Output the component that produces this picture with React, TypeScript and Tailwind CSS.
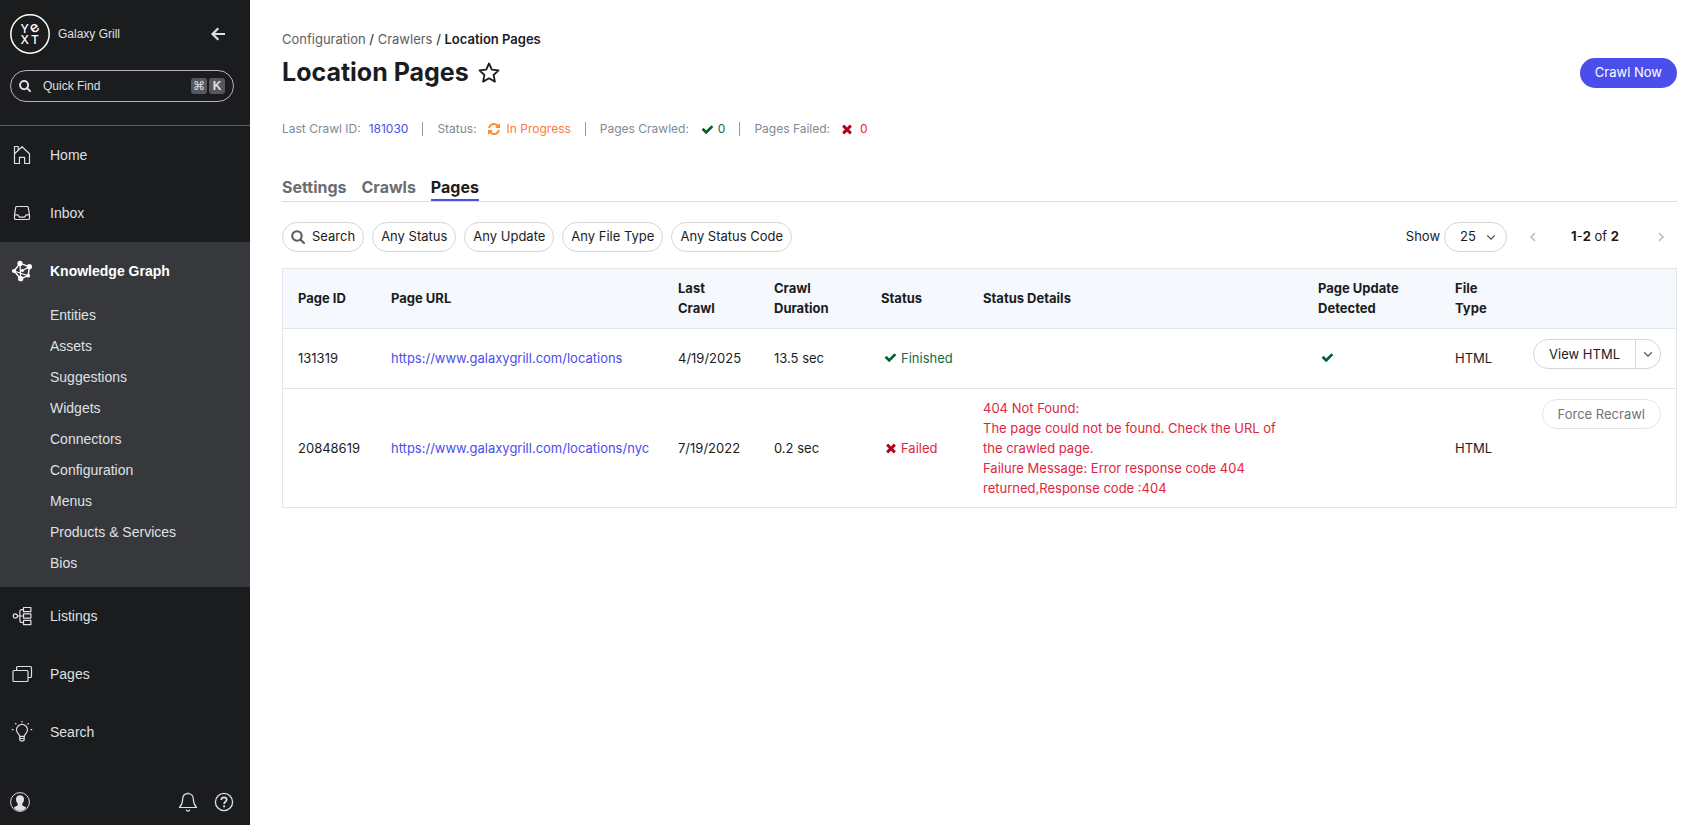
import React, { useState } from 'react';

const CheckIcon = () => (
  <svg viewBox="0 0 1792 1792" className="w-[13px] h-[13px] shrink-0 fill-[#00602b]" aria-hidden="true">
    <path d="M1671 566q0 40-28 68l-724 724-136 136q-28 28-68 28t-68-28l-136-136-362-362q-28-28-28-68t28-68l136-136q28-28 68-28t68 28l294 295 656-657q28-28 68-28t68 28l136 136q28 28 28 68z" />
  </svg>
);

const TimesIcon = () => (
  <svg viewBox="0 0 1792 1792" className="w-3.5 h-3.5 shrink-0 fill-[#b5001f]" aria-hidden="true">
    <path d="M1490 1322q0 40-28 68l-136 136q-28 28-68 28t-68-28l-294-294-294 294q-28 28-68 28t-68-28l-136-136q-28-28-28-68t28-68l294-294-294-294q-28-28-28-68t28-68l136-136q28-28 68-28t68 28l294 294 294-294q28-28 68-28t68 28l136 136q28 28 28 68t-28 68l-294 294 294 294q28 28 28 68z" />
  </svg>
);

const RefreshIcon = () => (
  <svg viewBox="0 0 1792 1792" className="w-3.5 h-3.5 shrink-0 fill-[#ff8a2b]" aria-hidden="true">
    <path d="M1639 1056q0 5-1 7-64 268-268 434.5t-478 166.5q-146 0-282.5-55t-243.5-157l-129 129q-19 19-45 19t-45-19-19-45v-448q0-26 19-45t45-19h448q26 0 45 19t19 45-19 45l-137 137q71 66 161 102t187 36q134 0 250-65t186-179q11-17 53-117 8-23 30-23h192q13 0 22.5 9.5t9.5 22.5zm25-800v448q0 26-19 45t-45 19h-448q-26 0-45-19t-19-45 19-45l138-138q-148-137-349-137-134 0-250 65t-186 179q-11 17-53 117-8 23-30 23h-199q-13 0-22.5-9.5t-9.5-22.5v-7q65-268 270-434.5t480-166.5q146 0 284 55.5t245 156.5l130-129q19-19 45-19t45 19 19 45z" />
  </svg>
);

const SearchIcon = ({ className }: { className: string }) => (
  <svg viewBox="0 0 16 16" className={className} fill="none" stroke="currentColor" aria-hidden="true">
    <circle cx="6.8" cy="6.8" r="5.4" />
    <path d="M10.8 10.8l4 4" strokeLinecap="round" />
  </svg>
);

const Chevron = ({ d, className }: { d: string; className: string }) => (
  <svg viewBox="0 0 12 12" className={className} fill="none" stroke="currentColor" strokeWidth="1.5" aria-hidden="true">
    <path d={d} />
  </svg>
);

const NavIcon = ({ children }: { children: React.ReactNode }) => (
  <svg viewBox="0 0 24 24" className="w-6 h-6 shrink-0" fill="none" stroke="currentColor" strokeWidth="1.2" strokeLinejoin="round" aria-hidden="true">
    {children}
  </svg>
);

const HomeIcon = () => (
  <NavIcon>
    <path d="M4.5 20.5V10.7L12 3.7l7.5 7v9.8h-4.9v-6.2H9.4v6.2z" />
    <path d="M4.5 10.5v-7h3.7v3.4" />
  </NavIcon>
);

const InboxIcon = () => (
  <NavIcon>
    <path d="M6.9 5.5h10.2q1 0 1.2 1l1.2 7.3v3.4q0 1.3-1.3 1.3H5.8q-1.3 0-1.3-1.3v-3.4l1.2-7.3q.2-1 1.2-1z" />
    <path d="M4.5 13.9h3.3l1.6 2.3h5.2l1.6-2.3h3.3" />
  </NavIcon>
);

const GraphIcon = () => (
  <NavIcon>
    <path d="M10 4.4l9.4 3.2-1.2 9.1-7.5 3L4 12z" strokeWidth="1.4" />
    <path d="M10 4.4l.7 15.3M12.7 11.5l6.7-3.9M4 12l14.2 4.7" strokeWidth="1.2" />
    <g fill="currentColor" stroke="none">
      <circle cx="10" cy="4.4" r="2.6" />
      <circle cx="19.4" cy="7.7" r="2.6" />
      <circle cx="4" cy="12" r="2.1" />
      <circle cx="18.2" cy="16.7" r="1.9" />
      <circle cx="10.7" cy="19.7" r="2.6" />
      <circle cx="12.4" cy="11.6" r="1.5" />
    </g>
  </NavIcon>
);

const ListingsIcon = () => (
  <NavIcon>
    <circle cx="5.3" cy="12" r="2.1" />
    <rect x="13.5" y="3.5" width="7.4" height="4.2" />
    <rect x="13.5" y="9.9" width="7.4" height="4.2" />
    <rect x="13.5" y="16.4" width="7.4" height="4.2" />
    <path d="M7.4 12h6.1M13.5 5.6h-1.6q-2 0-2 2v8.9q0 2 2 2h1.6" />
  </NavIcon>
);

const PagesIcon = () => (
  <NavIcon>
    <rect x="3" y="8.5" width="15" height="11" rx="1" />
    <path d="M6.6 8.3V5.5q0-1 1-1h12.9q1 0 1 1v9q0 1-1 1H18" />
  </NavIcon>
);

const BulbIcon = () => (
  <NavIcon>
    <path d="M9.7 16.4c0-2-3.2-3.3-3.2-6.5a5.5 5.5 0 0 1 11 0c0 3.2-3.2 4.5-3.2 6.5z" />
    <path d="M9.8 16.4v3q0 1.4 1.2 1.4h2q1.2 0 1.2-1.4v-3M9.8 18.5h4.4" />
    <path d="M12 .9v1.5M5.2 3.2l1.2 1.2M18.8 3.2l-1.2 1.2M1.800 9.600h1.600M20.600 9.600h1.600" />
  </NavIcon>
);

const subItems = ['Entities', 'Assets', 'Suggestions', 'Widgets', 'Connectors', 'Configuration', 'Menus', 'Products & Services', 'Bios'];

const NavItem = ({ label, icon, active }: { label: string; icon: React.ReactNode; active?: boolean }) => (
  <a
    href="#"
    className={`flex items-center gap-4 h-[58px] px-2.5 text-sm ${active ? 'text-white font-bold' : 'text-[#dfe0e4]'}`}
  >
    {icon}
    {label}
  </a>
);

const Sidebar = () => (
  <aside className="w-[250px] shrink-0 flex flex-col bg-[#1b1c1e] text-[#dfe0e4] font-['Liberation_Sans',Arial,sans-serif]">
    <div className="border-b border-[#5c5d60] px-2.5 pt-3.5 pb-[23px]">
      <div className="flex items-center">
        <svg viewBox="0 0 40 40" className="w-10 h-10 shrink-0" role="img" aria-label="Yext">
          <circle cx="20" cy="20" r="19.2" fill="none" stroke="#fff" strokeWidth="1.5" />
          <g fill="#fff" fontFamily="Inter, sans-serif" fontSize="12" fontWeight="500" textAnchor="middle">
            <text x="14.8" y="18.6">Y</text>
            <text x="24.8" y="18.2" fontSize="15" transform="rotate(-35 24.8 14.4)">e</text>
            <text x="14.8" y="30">X</text>
            <text x="25" y="30">T</text>
          </g>
        </svg>
        <span className="ml-2 text-xs">Galaxy Grill</span>
        <button className="ml-auto mr-3.5" aria-label="Collapse menu">
          <svg viewBox="0 0 16 16" className="w-4 h-4" fill="none" stroke="currentColor" strokeWidth="2.2">
            <path d="M8.3 2.2L2.5 8l5.8 5.8M2.5 8H15" />
          </svg>
        </button>
      </div>
      <button className="mt-4 w-[224px] h-8 flex items-center rounded-full border border-[#b5b5b8] px-2 text-xs">
        <SearchIcon className="w-3 h-3 stroke-[2.6]" />
        <span className="ml-3">Quick Find</span>
        <kbd className="ml-auto w-4 h-4 rounded-[3px] bg-[#55575a] flex items-center justify-center text-xs leading-4 font-['DejaVu_Sans',sans-serif]">⌘</kbd>
        <kbd className="ml-0.5 w-4 h-4 rounded-[3px] bg-[#55575a] flex items-center justify-center text-xs leading-4 font-bold font-['Liberation_Sans',Arial,sans-serif]">K</kbd>
      </button>
    </div>
    <nav>
      <NavItem label="Home" icon={<HomeIcon />} />
      <NavItem label="Inbox" icon={<InboxIcon />} />
      <div className="bg-[#37383c] pb-2">
        <NavItem label="Knowledge Graph" icon={<GraphIcon />} active />
        <ul>
          {subItems.map((item) => (
            <li key={item}>
              <a href="#" className="block pl-[50px] text-sm leading-[31px]">{item}</a>
            </li>
          ))}
        </ul>
      </div>
      <NavItem label="Listings" icon={<ListingsIcon />} />
      <NavItem label="Pages" icon={<PagesIcon />} />
      <NavItem label="Search" icon={<BulbIcon />} />
    </nav>
    <div className="mt-auto flex items-center pl-2.5 pr-4 pb-[13px]">
      <button aria-label="Account">
        <svg viewBox="0 0 20 20" className="w-5 h-5">
          <circle cx="10" cy="10" r="9.4" fill="none" stroke="currentColor" strokeWidth="1" />
          <path d="M10 3.2c2.5 0 4 1.6 4 4 0 1.8-.7 3.3-1.7 4.2v1.9c.5.9 3 1.2 4 2.4A9 9 0 0 1 10 19a9 9 0 0 1-6.3-3.3c1-1.2 3.5-1.5 4-2.4v-1.9C6.7 10.5 6 9 6 7.2c0-2.4 1.5-4 4-4z" fill="currentColor" />
        </svg>
      </button>
      <button className="ml-auto" aria-label="Notifications">
        <svg viewBox="0 0 20 20" className="w-5 h-5" fill="none" stroke="currentColor" strokeWidth="1.2" strokeLinejoin="round">
          <path d="M10 1.7c-3.4 0-5.3 2.3-5.3 5.3 0 4.5-1 6-3.2 8.5h17c-2.2-2.5-3.2-4-3.2-8.5 0-3-1.9-5.3-5.3-5.3zM10 .4v1.3M8.2 17.7c.2 1 .9 1.5 1.8 1.5s1.6-.5 1.8-1.5" />
        </svg>
      </button>
      <button className="ml-4" aria-label="Help">
        <svg viewBox="0 0 20 20" className="w-5 h-5" fill="none" stroke="currentColor" strokeWidth="1.3">
          <circle cx="10" cy="10" r="8.6" />
          <path d="M7.3 8c0-1.7 1.1-2.6 2.7-2.6s2.7.9 2.7 2.4c0 2-2.6 1.9-2.6 4.1" strokeWidth="1.7" />
          <circle cx="10.1" cy="14.3" r="1.1" fill="currentColor" stroke="none" />
        </svg>
      </button>
    </div>
  </aside>
);

const Divider = () => <span className="w-px h-3.5 mx-3.5 bg-[#8d99a3]" />;

const CrawlStatus = () => (
  <div className="mt-[31px] flex items-center text-xs leading-5 text-[#7e8b95]">
    <span>Last Crawl ID:</span>
    <a href="#" className="ml-2 text-[#4b4eea]">181030</a>
    <Divider />
    <span>Status:</span>
    <span className="ml-2.5 flex items-center gap-1.5 text-[#fb7a3c]"><RefreshIcon />In Progress</span>
    <Divider />
    <span>Pages Crawled:</span>
    <span className="ml-3 flex items-center gap-1 text-[#0f6c45]"><CheckIcon />0</span>
    <Divider />
    <span>Pages Failed:</span>
    <span className="ml-2.5 flex items-center gap-1.5 text-[#e0263f]"><TimesIcon />0</span>
  </div>
);

const tabs = ['Settings', 'Crawls', 'Pages'];

const Tabs = () => (
  <div className="mt-9 flex gap-[15px] border-b border-[#dcdddf]">
    {tabs.map((tab) => (
      <a
        key={tab}
        href="#"
        className={`text-base leading-6 font-bold border-b-2 ${tab === 'Pages' ? 'text-[#1b1c1e] border-[#4b4eea]' : 'text-[#6b6d70] border-transparent'}`}
      >
        {tab}
      </a>
    ))}
  </div>
);

const filters = ['Any Status', 'Any Update', 'Any File Type', 'Any Status Code'];

const Toolbar = () => {
  const [pageSize, setPageSize] = useState('25');

  return (
    <div className="mt-5 flex items-center">
      <div className="flex gap-2">
        <button className="h-[30px] px-2 flex items-center gap-[7px] rounded-full border border-[#d4d5d8]">
          <SearchIcon className="w-3.5 h-3.5 stroke-[2.4] text-[#5c5e61]" />
          Search
        </button>
        {filters.map((filter) => (
          <button key={filter} className="h-[30px] px-2 rounded-full border border-[#d4d5d8]">{filter}</button>
        ))}
      </div>
      <div className="ml-auto flex items-center">
        <label htmlFor="page-size">Show</label>
        <div className="relative ml-1">
          <select
            id="page-size"
            value={pageSize}
            onChange={(e) => setPageSize(e.target.value)}
            className="block w-[63px] h-[30px] pl-[15px] rounded-full border border-[#d4d5d8] bg-white appearance-none"
          >
            <option>25</option>
            <option>50</option>
            <option>100</option>
          </select>
          <Chevron d="M1.5 4L6 8.5 10.5 4" className="w-2.5 h-2.5 absolute right-[11px] top-2.5 text-[#3f4b57] pointer-events-none" />
        </div>
        <button className="ml-5 text-[#b6bbc0]" aria-label="Previous page" disabled>
          <Chevron d="M8 2L4 6l4 4" className="w-3 h-3" />
        </button>
        <span className="ml-8"><b className="font-bold">1</b>-<b className="font-bold">2</b> of <b className="font-bold">2</b></span>
        <button className="ml-9 mr-2.5 text-[#b6bbc0]" aria-label="Next page" disabled>
          <Chevron d="M4 2l4 4-4 4" className="w-3 h-3" />
        </button>
      </div>
    </div>
  );
};

const cell = 'h-[60px] border-b border-[#e2e5ea] pl-[15px] pb-0.5 text-left';
const lastCell = 'py-[9px] pl-[15px] text-left';

const PagesTable = () => (
  <div className="mt-4 border border-[#e2e5ea]">
    <table className="w-full table-fixed border-separate border-spacing-0 leading-5">
      <colgroup>
        <col className="w-[93px]" />
        <col className="w-[287px]" />
        <col className="w-24" />
        <col className="w-[107px]" />
        <col className="w-[102px]" />
        <col />
        <col className="w-[137px]" />
        <col className="w-[78px]" />
        <col className="w-[158px]" />
      </colgroup>
      <thead className="bg-[#f5f8fd]">
        <tr>
          <th className={`${cell} font-bold`}>Page ID</th>
          <th className={`${cell} font-bold`}>Page URL</th>
          <th className={`${cell} font-bold`}>Last<br />Crawl</th>
          <th className={`${cell} font-bold`}>Crawl<br />Duration</th>
          <th className={`${cell} font-bold`}>Status</th>
          <th className={`${cell} font-bold`}>Status Details</th>
          <th className={`${cell} font-bold`}>Page Update<br />Detected</th>
          <th className={`${cell} font-bold`}>File<br />Type</th>
          <td className={cell}></td>
        </tr>
      </thead>
      <tbody>
        <tr>
          <td className={cell}>131319</td>
          <td className={cell}><a href="#" className="text-[#4b4eea]">https://www.galaxygrill.com/locations</a></td>
          <td className={cell}>4/19/2025</td>
          <td className={cell}>13.5 sec</td>
          <td className={cell}>
            <span className="ml-[3px] flex items-center gap-1 text-[#0f6c45]"><CheckIcon />Finished</span>
          </td>
          <td className={cell}></td>
          <td className={cell}><span className="ml-[3px] flex"><CheckIcon /></span></td>
          <td className={cell}>HTML</td>
          <td className={`${cell} align-top pt-2.5 pr-[15px]`}>
            <div className="flex justify-end">
              <button className="h-[30px] px-[15px] rounded-l-full border border-[#d4d5d8] whitespace-nowrap">View HTML</button>
              <button className="h-[30px] w-[25px] shrink-0 flex items-center justify-center rounded-r-full border border-l-0 border-[#d4d5d8]" aria-label="More actions">
                <Chevron d="M1.5 4L6 8.5 10.5 4" className="w-2.5 h-2.5 text-[#3f4b57]" />
              </button>
            </div>
          </td>
        </tr>
        <tr>
          <td className={lastCell}>20848619</td>
          <td className={lastCell}><a href="#" className="text-[#4b4eea]">https://www.galaxygrill.com/locations/nyc</a></td>
          <td className={lastCell}>7/19/2022</td>
          <td className={lastCell}>0.2 sec</td>
          <td className={lastCell}>
            <span className="ml-[3px] flex items-center gap-[3px] text-[#e0263f]"><TimesIcon />Failed</span>
          </td>
          <td className={`${lastCell} pr-4 text-[#e0263f]`}>
            <p>404 Not Found:</p>
            <p>The page could not be found. Check the URL of the crawled page.</p>
            <p>Failure Message: Error response code 404 returned,Response code :404</p>
          </td>
          <td className={lastCell}></td>
          <td className={lastCell}>HTML</td>
          <td className="align-top pt-2.5 pr-[15px] text-right">
            <button className="h-[30px] px-[15px] rounded-full border border-[#e4e5e7] text-[#717375]" disabled>Force Recrawl</button>
          </td>
        </tr>
      </tbody>
    </table>
  </div>
);

const App = () => {
  return (
    <div className="flex min-h-screen bg-white text-[#1b1c1e]">
      <Sidebar />
      <main className="grow min-w-0 pl-8 pr-[18px] pt-[29px] text-[13px] font-['Inter',sans-serif]">
        <nav className="leading-5" aria-label="Breadcrumb">
          <a href="#" className="text-[#5c5e61]">Configuration</a>
          {' / '}
          <a href="#" className="text-[#5c5e61]">Crawlers</a>
          {' / '}
          <span className="font-semibold">Location Pages</span>
        </nav>
        <div className="mt-[9px] h-[30px] flex items-center">
          <h1 className="text-[25px] font-bold">Location Pages</h1>
          <button className="ml-2" aria-label="Add to favorites">
            <svg viewBox="0 0 24 24" className="w-6 h-6" fill="none" stroke="currentColor" strokeWidth="1.8" strokeLinejoin="round">
              <path d="M12 2.5l2.8 6.1 6.7.8-4.9 4.6 1.3 6.6L12 17.3l-5.9 3.3 1.3-6.6-4.9-4.6 6.7-.8z" />
            </svg>
          </button>
          <button className="ml-auto h-[30px] px-[15px] rounded-full bg-[#4b4eea] text-white">Crawl Now</button>
        </div>
        <CrawlStatus />
        <Tabs />
        <Toolbar />
        <PagesTable />
      </main>
    </div>
  );
};

export default App;
